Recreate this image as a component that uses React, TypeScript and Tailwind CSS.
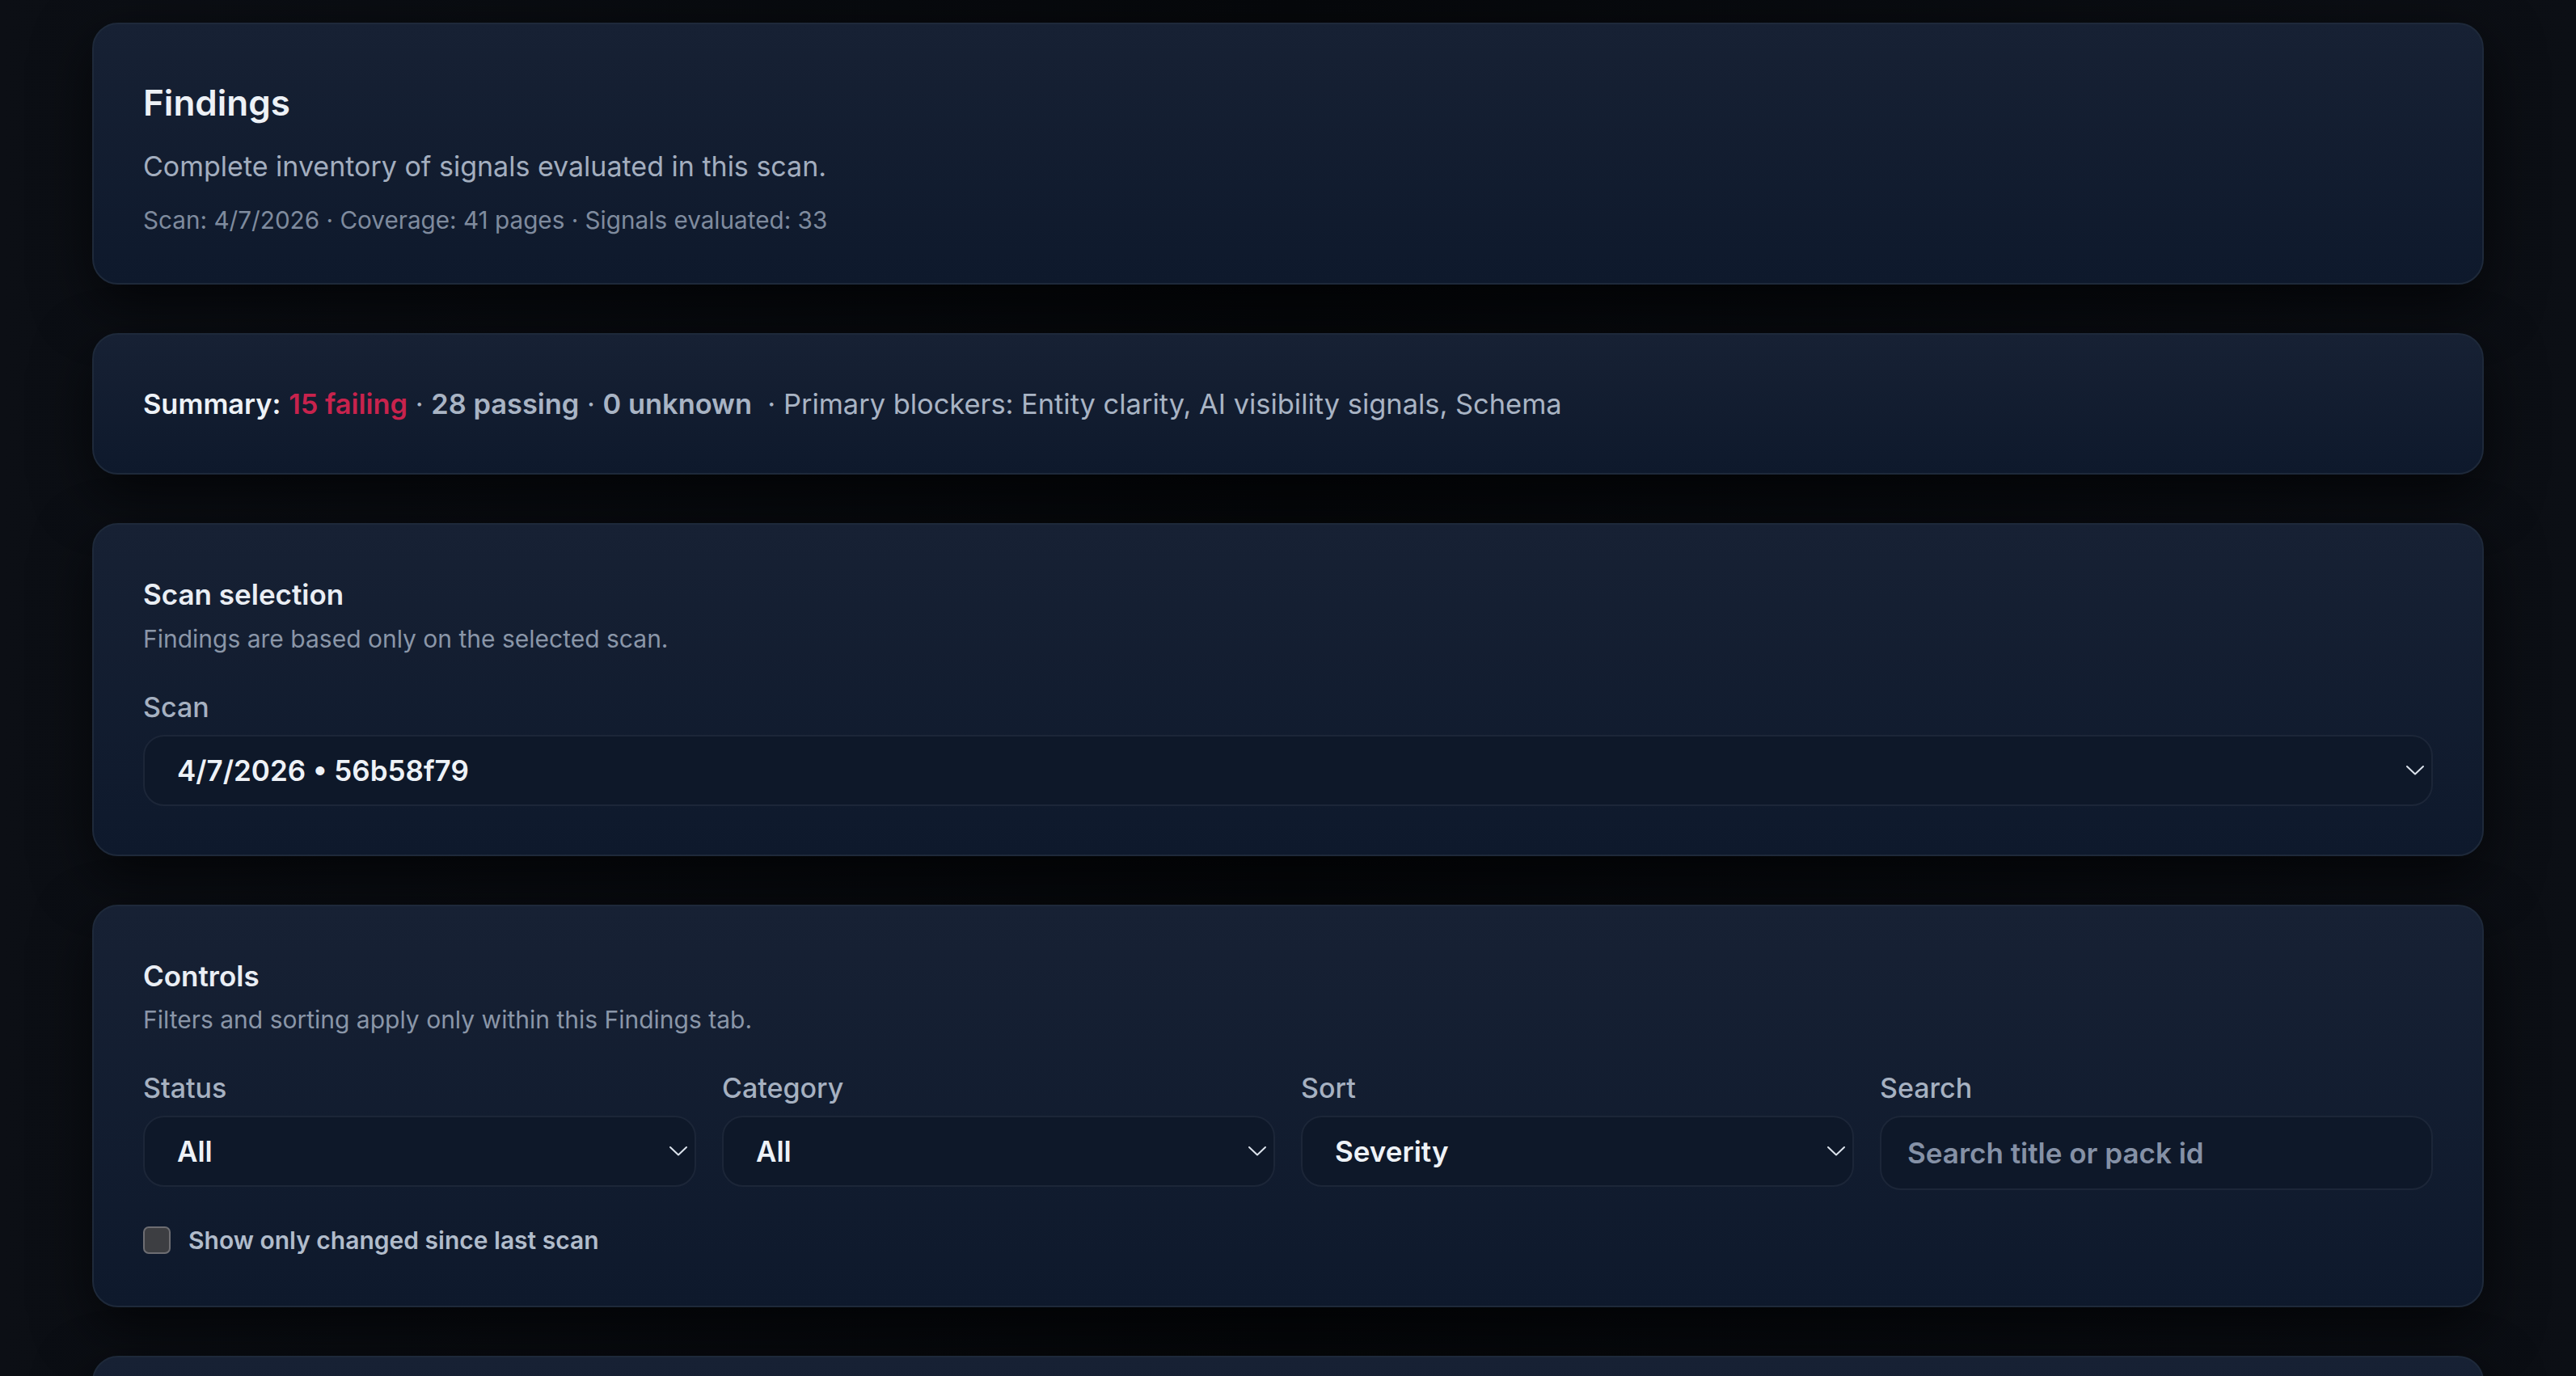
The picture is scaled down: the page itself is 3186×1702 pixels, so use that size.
import React from 'react';

const Chevron = () => (
    <svg width="24" height="14" viewBox="0 0 24 14" fill="none" className="shrink-0">
        <polyline points="2,2 12,11.5 22,2" stroke="#dce3ec" strokeWidth="2" strokeLinecap="round" strokeLinejoin="round" />
    </svg>
);

const Card = ({ children, className = '' }: { children: React.ReactNode; className?: string }) => (
    <section className={`rounded-[32px] border-2 border-[#1e293a] bg-gradient-to-b from-[#172134] to-[#0e192c] shadow-[0_24px_70px_rgba(0,0,0,0.6)] px-[61px] ${className}`}>
        {children}
    </section>
);

const FakeSelect = ({ value }: { value: string }) => (
    <div className="h-[88px] w-full flex items-center justify-between pl-[40px] pr-[8px] rounded-[26px] border-2 border-[#1c2638] bg-[#0e1829]">
        <span className="text-[35px] font-semibold text-[#eef2f7]">{value}</span>
        <Chevron />
    </div>
);

const Field = ({ label, children }: { label: string; children: React.ReactNode }) => (
    <div className="flex flex-col">
        <label className="text-[34px] leading-[44px] font-medium text-[#a6b1c1]">{label}</label>
        <div className="mt-[12px]">{children}</div>
    </div>
);

export default function App() {
    return (
        <div
            className="h-screen overflow-hidden bg-gradient-to-r from-[#0c0f15] via-[#06080b] to-[#0c0f15] px-[114px] pt-[28px] flex flex-col gap-[60px]"
            style={{ fontFamily: 'Inter, "Noto Sans", sans-serif' }}
        >
            {/* Header */}
            <Card className="pt-[62px] pb-[60px]">
                <h1 className="text-[44px] leading-[70px] font-semibold text-[#edf1f6]">Findings</h1>
                <p className="mt-[20px] text-[34px] leading-[48px] text-[#a3aebf]">
                    Complete inventory of signals evaluated in this scan.
                </p>
                <p className="mt-[24px] text-[29.7px] leading-[36px] text-[#7f8b9e]">
                    Scan: 4/7/2026 · Coverage: 41 pages · Signals evaluated: 33
                </p>
            </Card>

            {/* Summary */}
            <Card className="py-[62px]">
                <p className="text-[34.4px] leading-[47px] text-[#a9b4c4]">
                    <span className="font-semibold text-[#eef2f7]">Summary:</span>{' '}
                    <span className="font-semibold text-[#c8234d]">15 failing</span>
                    {' · '}
                    <span className="font-semibold">28 passing</span>
                    {' · '}
                    <span className="font-semibold">0 unknown</span>
                    {'\u00a0 · Primary blockers: Entity clarity, AI visibility signals, Schema'}
                </p>
            </Card>

            {/* Scan selection */}
            <Card className="pt-[62px] pb-[60px]">
                <h2 className="text-[35px] leading-[48px] font-semibold text-[#eaeef4]">Scan selection</h2>
                <p className="mt-[11px] text-[30px] leading-[40px] text-[#8a96a8]">
                    Findings are based only on the selected scan.
                </p>
                <div className="mt-[43px]">
                    <Field label="Scan">
                        <FakeSelect value="4/7/2026 • 56b58f79" />
                    </Field>
                </div>
            </Card>

            {/* Controls */}
            <Card className="pt-[62px] pb-[61px]">
                <h2 className="text-[35px] leading-[48px] font-semibold text-[#eaeef4]">Controls</h2>
                <p className="mt-[10px] text-[30px] leading-[40px] text-[#8a96a8]">
                    Filters and sorting apply only within this Findings tab.
                </p>
                <div className="mt-[43px] grid grid-cols-4 gap-[32px] items-start">
                    <Field label="Status">
                        <FakeSelect value="All" />
                    </Field>
                    <Field label="Category">
                        <FakeSelect value="All" />
                    </Field>
                    <Field label="Sort">
                        <FakeSelect value="Severity" />
                    </Field>
                    <Field label="Search">
                        <input
                            type="text"
                            placeholder="Search title or pack id"
                            className="h-[92px] w-full pl-[32px] pr-[20px] rounded-[26px] border-2 border-[#1c2638] bg-[#0e1829] text-[35px] font-semibold text-[#eef2f7] placeholder:text-[#8591a6] focus:outline-none"
                        />
                    </Field>
                </div>
                <label className="mt-[42px] flex items-center gap-[22px] h-[40px]">
                    <span className="w-[34px] h-[34px] rounded-[7px] border-2 border-[#6d6d72] bg-[#3d3e42]" />
                    <span className="text-[30px] font-semibold text-[#b1bccb]">Show only changed since last scan</span>
                </label>
            </Card>

            {/* Next section (cut off) */}
            <Card className="h-[400px] shrink-0">
                <div />
            </Card>
        </div>
    );
}
